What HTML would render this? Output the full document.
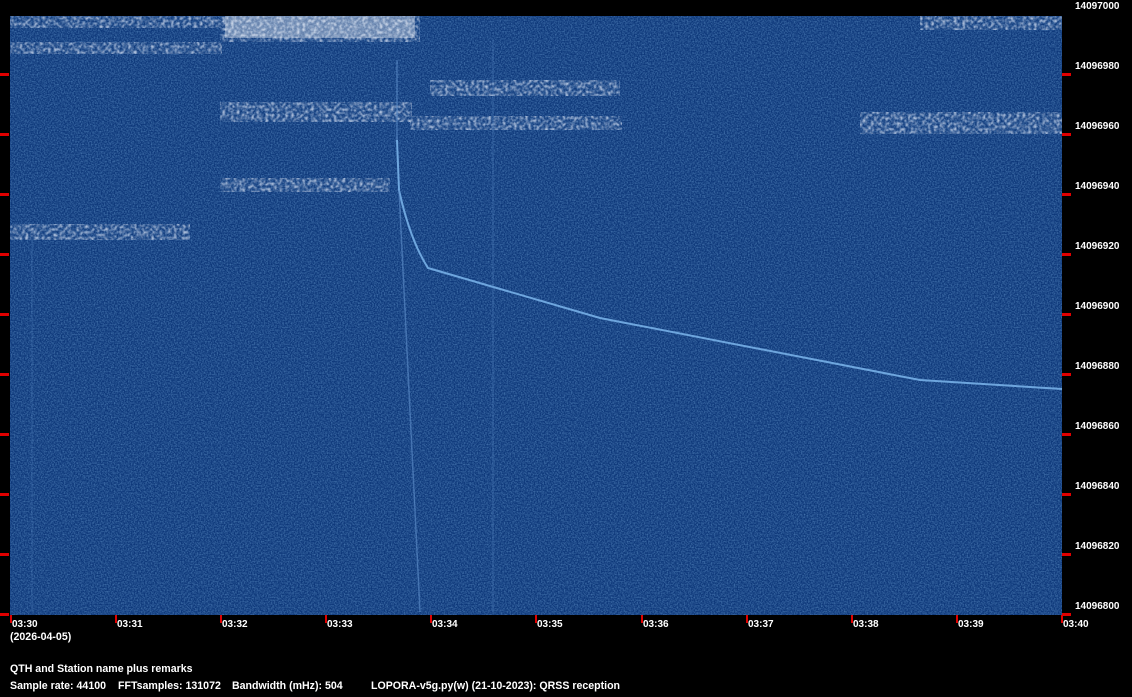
<!DOCTYPE html>
<html><head><style>
body{margin:0;width:1132px;height:697px;background:#000;position:relative;overflow:hidden;font-family:"Liberation Sans",sans-serif;font-weight:bold;font-size:10px;color:#fff}
.t{position:absolute;white-space:pre;line-height:12px}
.f{font-size:10.6px}
.r{position:absolute;background:#e00000}
</style></head><body>
<svg width="1132" height="697" style="position:absolute;left:0;top:0">
<defs>
<filter id="n" x="0" y="0" width="100%" height="100%">
<feTurbulence type="fractalNoise" baseFrequency="0.7" numOctaves="2" seed="3"/>
<feColorMatrix type="matrix" values="0 0 0 0 0.15  0 0 0 0 0.35  0 0 0 0 0.65  0 0 0 -1.5 1.0"/>
</filter>
<filter id="s" x="0" y="0" width="100%" height="100%">
<feTurbulence type="fractalNoise" baseFrequency="0.35" numOctaves="2" seed="7"/>
<feColorMatrix type="matrix" values="0 0 0 0 0.85  0 0 0 0 0.9  0 0 0 0 1  0 0 0 -3 1.7"/>
<feGaussianBlur stdDeviation="0.6"/>
</filter>
<clipPath id="c"><rect x="220" y="16" width="200" height="26"/><rect x="220" y="102" width="192" height="20"/><rect x="860" y="112" width="202" height="22"/><rect x="430" y="80" width="190" height="16"/><rect x="410" y="116" width="212" height="14"/><rect x="10" y="224" width="180" height="16"/><rect x="220" y="178" width="170" height="14"/><rect x="10" y="16" width="212" height="12"/><rect x="10" y="42" width="212" height="12"/><rect x="920" y="16" width="142" height="14"/></clipPath>
</defs>
<rect x="10" y="16" width="1052" height="599" fill="#0e387a"/>
<rect x="10" y="16" width="1052" height="599" filter="url(#n)" opacity="0.7"/>
<g clip-path="url(#c)">
<rect x="10" y="16" width="1052" height="230" filter="url(#s)" opacity="0.75"/>
</g>
<rect x="225" y="16" width="190" height="22" fill="#fff" opacity="0.35"/>
<path d="M397 140 L399 190 Q410 240 428 268 L600 318 L920 380 L1062 389" stroke="#6ea6de" stroke-width="2" fill="none"/>
<path d="M397 60 L397 140" stroke="#5f90cc" stroke-width="1.5" fill="none" opacity="0.6"/>
<path d="M399 190 L420 612" stroke="#5f90cc" stroke-width="1.5" fill="none" opacity="0.6"/>
<path d="M493 40 L493 612" stroke="#5f90cc" stroke-width="1" opacity="0.4"/>
<path d="M32 240 L32 612" stroke="#5f90cc" stroke-width="1" opacity="0.3"/>
</svg>
<div class="r" style="left:0;top:73px;width:9px;height:3px"></div>
<div class="r" style="left:0;top:133px;width:9px;height:3px"></div>
<div class="r" style="left:0;top:193px;width:9px;height:3px"></div>
<div class="r" style="left:0;top:253px;width:9px;height:3px"></div>
<div class="r" style="left:0;top:313px;width:9px;height:3px"></div>
<div class="r" style="left:0;top:373px;width:9px;height:3px"></div>
<div class="r" style="left:0;top:433px;width:9px;height:3px"></div>
<div class="r" style="left:0;top:493px;width:9px;height:3px"></div>
<div class="r" style="left:0;top:553px;width:9px;height:3px"></div>
<div class="r" style="left:0;top:613px;width:9px;height:3px"></div>
<div class="r" style="left:1062px;top:73px;width:9px;height:3px"></div>
<div class="r" style="left:1062px;top:133px;width:9px;height:3px"></div>
<div class="r" style="left:1062px;top:193px;width:9px;height:3px"></div>
<div class="r" style="left:1062px;top:253px;width:9px;height:3px"></div>
<div class="r" style="left:1062px;top:313px;width:9px;height:3px"></div>
<div class="r" style="left:1062px;top:373px;width:9px;height:3px"></div>
<div class="r" style="left:1062px;top:433px;width:9px;height:3px"></div>
<div class="r" style="left:1062px;top:493px;width:9px;height:3px"></div>
<div class="r" style="left:1062px;top:553px;width:9px;height:3px"></div>
<div class="r" style="left:1062px;top:613px;width:9px;height:3px"></div>
<div class="t" style="left:1075px;top:1px">14097000</div>
<div class="t" style="left:1075px;top:61px">14096980</div>
<div class="t" style="left:1075px;top:121px">14096960</div>
<div class="t" style="left:1075px;top:181px">14096940</div>
<div class="t" style="left:1075px;top:241px">14096920</div>
<div class="t" style="left:1075px;top:301px">14096900</div>
<div class="t" style="left:1075px;top:361px">14096880</div>
<div class="t" style="left:1075px;top:421px">14096860</div>
<div class="t" style="left:1075px;top:481px">14096840</div>
<div class="t" style="left:1075px;top:541px">14096820</div>
<div class="t" style="left:1075px;top:601px">14096800</div>
<div class="r" style="left:10px;top:615px;width:2px;height:8px"></div>
<div class="r" style="left:115px;top:615px;width:2px;height:8px"></div>
<div class="r" style="left:220px;top:615px;width:2px;height:8px"></div>
<div class="r" style="left:325px;top:615px;width:2px;height:8px"></div>
<div class="r" style="left:430px;top:615px;width:2px;height:8px"></div>
<div class="r" style="left:535px;top:615px;width:2px;height:8px"></div>
<div class="r" style="left:641px;top:615px;width:2px;height:8px"></div>
<div class="r" style="left:746px;top:615px;width:2px;height:8px"></div>
<div class="r" style="left:851px;top:615px;width:2px;height:8px"></div>
<div class="r" style="left:956px;top:615px;width:2px;height:8px"></div>
<div class="r" style="left:1061px;top:615px;width:2px;height:8px"></div>
<div class="t" style="left:12px;top:619px">03:30</div>
<div class="t" style="left:117px;top:619px">03:31</div>
<div class="t" style="left:222px;top:619px">03:32</div>
<div class="t" style="left:327px;top:619px">03:33</div>
<div class="t" style="left:432px;top:619px">03:34</div>
<div class="t" style="left:537px;top:619px">03:35</div>
<div class="t" style="left:643px;top:619px">03:36</div>
<div class="t" style="left:748px;top:619px">03:37</div>
<div class="t" style="left:853px;top:619px">03:38</div>
<div class="t" style="left:958px;top:619px">03:39</div>
<div class="t" style="left:1063px;top:619px">03:40</div>
<div class="t f" style="left:10px;top:631px">(2026-04-05)</div>
<div class="t f" style="left:10px;top:663px">QTH and Station name plus remarks</div>
<div class="t f" style="left:10px;top:680px">Sample rate: 44100</div>
<div class="t f" style="left:118px;top:680px">FFTsamples: 131072</div>
<div class="t f" style="left:232px;top:680px">Bandwidth (mHz): 504</div>
<div class="t f" style="left:371px;top:680px">LOPORA-v5g.py(w) (21-10-2023): QRSS reception</div>
</body></html>
